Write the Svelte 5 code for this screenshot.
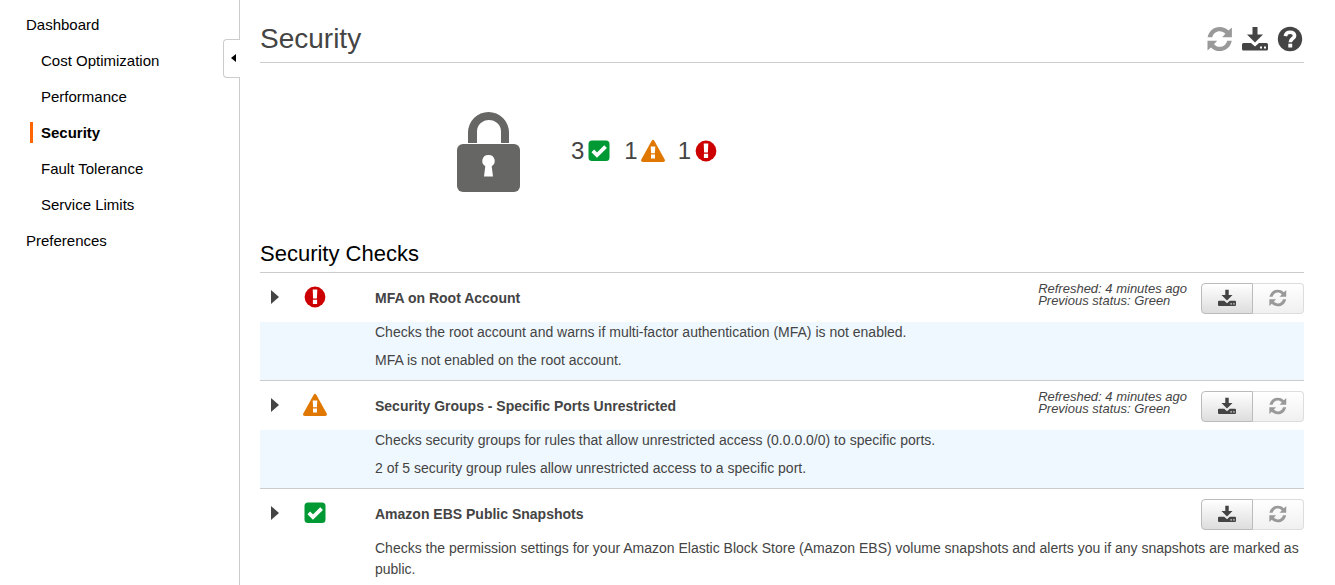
<script>
  const nav = [
    { label: 'Dashboard', level: 0 },
    { label: 'Cost Optimization', level: 1 },
    { label: 'Performance', level: 1 },
    { label: 'Security', level: 1, current: true },
    { label: 'Fault Tolerance', level: 1 },
    { label: 'Service Limits', level: 1 },
    { label: 'Preferences', level: 0 }
  ];

  const summary = [
    { count: 3, status: 'ok' },
    { count: 1, status: 'warning' },
    { count: 1, status: 'error' }
  ];

  const checks = [
    {
      title: 'MFA on Root Account',
      status: 'error',
      refreshed: 'Refreshed: 4 minutes ago',
      previous: 'Previous status: Green',
      highlighted: true,
      lines: [
        'Checks the root account and warns if multi-factor authentication (MFA) is not enabled.',
        'MFA is not enabled on the root account.'
      ]
    },
    {
      title: 'Security Groups - Specific Ports Unrestricted',
      status: 'warning',
      refreshed: 'Refreshed: 4 minutes ago',
      previous: 'Previous status: Green',
      highlighted: true,
      lines: [
        'Checks security groups for rules that allow unrestricted access (0.0.0.0/0) to specific ports.',
        '2 of 5 security group rules allow unrestricted access to a specific port.'
      ]
    },
    {
      title: 'Amazon EBS Public Snapshots',
      status: 'ok',
      highlighted: false,
      lines: [
        'Checks the permission settings for your Amazon Elastic Block Store (Amazon EBS) volume snapshots and alerts you if any snapshots are marked as public.'
      ]
    }
  ];
</script>

{#snippet statusIcon(status)}
  <svg class="status" viewBox="0 0 24 24" aria-hidden="true">
    {#if status === 'ok'}
      <rect x="1.5" y="1.5" width="21" height="20.5" rx="3.5" fill="#093" />
      <path d="M5.8 11.8 10 16 18.6 7.6" fill="none" stroke="#fff" stroke-width="3.8" />
    {:else if status === 'warning'}
      <path d="M10.7 1.7Q12 -.3 13.3 1.7L23.7 20.4Q24.5 22.7 22.2 22.9H1.8Q-.5 22.7.3 20.4Z" fill="#e07700" />
      <path d="M9.700 7.500H14.300L13.900 14.300H10.100ZM10 15.500H14V19.500H10Z" fill="#fff" />
    {:else}
      <circle cx="12" cy="12" r="10.4" fill="#c00" />
      <path d="M9.700 4.600H14.300L13.900 13.400H10.100ZM9.900 14.800H14.100V18.900H9.900Z" fill="#fff" />
    {/if}
  </svg>
{/snippet}

{#snippet refreshIcon()}
  <svg class="glyph" viewBox="0 0 26 26" aria-hidden="true">
    <path
      fill="currentColor"
      d="M.6 11.300C2 4.700 6.700 1 12.700 1C16.200 1 19.100 2.200 21.500 4.600L24.900 1.500V11.300H15.200L18.400 7.800C16.800 6.100 15 5.200 12.700 5.200C8.900 5.200 6.200 7.500 5.200 11.300ZM24.800 14.700C23.400 21.300 18.700 25 12.700 25C9.200 25 6.300 23.800 3.900 21.400L.5 24.500V14.700H10.200L7 18.200C8.600 19.900 10.400 20.800 12.700 20.800C16.500 20.800 19.200 18.500 20.200 14.700Z"
    />
  </svg>
{/snippet}

{#snippet downloadIcon()}
  <svg class="glyph" viewBox="0 0 26 26" aria-hidden="true">
    <path
      fill="currentColor"
      fill-rule="evenodd"
      d="M10.500 1H15.500V8.500H21L13 16.600 5 8.500H10.500ZM1.500 17H9L13 20.500 17 17H24.500Q26 17 26 18.500V23Q26 24.500 24.500 24.500H1.500Q0 24.500 0 23V18.500Q0 17 1.500 17ZM18 20.500V22.500H20V20.500ZM22 20.500V22.500H24V20.500Z"
    />
  </svg>
{/snippet}

<div class="page">
  <aside>
    <nav aria-label="Main">
      {#each nav as item}
        <a
          href="#{item.label}"
          class:nested={item.level === 1}
          class:current={item.current}
          aria-current={item.current ? 'page' : undefined}><span>{item.label}</span></a>
      {/each}
    </nav>
    <button class="collapse" type="button" aria-label="Collapse menu">
      <svg viewBox="0 0 6 8" aria-hidden="true"><path d="M6 0V8L1 4Z" /></svg>
    </button>
  </aside>

  <main>
    <header>
      <h1>Security</h1>
      <div class="tools">
        <button class="muted" type="button" aria-label="Refresh all">{@render refreshIcon()}</button>
        <button type="button" aria-label="Download all">{@render downloadIcon()}</button>
        <button type="button" aria-label="Help">
          <svg class="glyph" viewBox="0 0 26 26" aria-hidden="true">
            <circle cx="13" cy="13" r="12.200" fill="currentColor" />
            <path d="M8.300 10.100C8.900 7.300 10.700 6.200 13.100 6.200C15.800 6.200 17.600 7.700 17.600 9.700C17.600 12.700 13.300 12.500 13.300 16.300" fill="none" stroke="#fff" stroke-width="3.600" />
            <path d="M11.300 17.700H15.200V21.500H11.300Z" fill="#fff" />
          </svg>
        </button>
      </div>
    </header>

    <section class="summary" aria-label="Summary">
      <svg class="lock" viewBox="0 0 64 80" aria-hidden="true">
        <path d="M11 31V20.500A20.500 20.500 0 0 1 52 20.500V31H44V19.500A12 11.500 0 0 0 20 19.500V31Z" fill="#666664" />
        <rect x="0" y="32" width="63" height="48" rx="6" fill="#666664" />
        <path d="M31.500 43A6 6 0 0 1 34.700 54.200L36 64.500H27L28.300 54.200A6 6 0 0 1 31.500 43Z" fill="#fff" />
      </svg>
      <ul>
        {#each summary as item}
          <li>{item.count}{@render statusIcon(item.status)}</li>
        {/each}
      </ul>
    </section>

    <h2>Security Checks</h2>
    {#each checks as check}
      <article>
        <div class="head">
          <div class="marker">
            <button class="expand" type="button" aria-label="Expand {check.title}">
              <svg viewBox="0 0 8 14" aria-hidden="true"><path d="M0 0 8 7 0 14Z" fill="currentColor" /></svg>
            </button>
            {@render statusIcon(check.status)}
          </div>
          <h3>{check.title}</h3>
          {#if check.refreshed}
            <p class="times">{check.refreshed}<br />{check.previous}</p>
          {/if}
          <div class="actions">
            <button type="button" aria-label="Download {check.title}">{@render downloadIcon()}</button>
            <button type="button" disabled aria-label="Refresh {check.title}">{@render refreshIcon()}</button>
          </div>
        </div>
        <div class="detail" class:highlighted={check.highlighted}>
          {#each check.lines as line}<p>{line}</p>{/each}
        </div>
      </article>
    {/each}
  </main>
</div>

<style>
  :global(body) {
    margin: 0;
    background: #fff;
  }
  .page {
    display: flex;
    min-height: 100vh;
    font-family: 'Liberation Sans', Arial, sans-serif;
    font-size: 14px;
    color: #444;
  }
  h1, h2, h3, p, ul {
    margin: 0;
    padding: 0;
    font-weight: normal;
  }
  button {
    margin: 0;
    padding: 0;
    border: 0;
    background: none;
    color: inherit;
    font: inherit;
    cursor: pointer;
  }
  svg {
    display: block;
    flex: none;
  }
  aside {
    position: relative;
    box-sizing: border-box;
    flex: none;
    width: 240px;
    padding: 6px 0;
    border-right: 1px solid #ccc;
  }
  nav {
    display: flex;
    flex-direction: column;
  }
  nav a {
    display: flex;
    align-items: center;
    height: 36px;
    padding-left: 26px;
    font-size: 15px;
    color: #000;
    text-decoration: none;
  }
  nav a.nested {
    padding-left: 41px;
  }
  nav a.current {
    padding-left: 30px;
    font-weight: bold;
  }
  .current span {
    padding-left: 8px;
    border-left: 3px solid #f60;
    line-height: 21px;
  }
  .collapse {
    position: absolute;
    top: 39px;
    right: -1px;
    display: flex;
    align-items: center;
    box-sizing: border-box;
    width: 17px;
    height: 39px;
    padding: 0 0 2px 6px;
    border: 1px solid #ccc;
    border-right: 0;
    border-radius: 4px 0 0 4px;
    background: #fff;
  }
  .collapse svg {
    width: 6px;
    height: 8px;
  }
  main {
    flex: 1;
    min-width: 0;
    padding: 16px 31px 0 20px;
  }
  header {
    display: flex;
    justify-content: space-between;
    align-items: center;
    height: 46px;
    border-bottom: 1px solid #ccc;
  }
  h1 {
    font-size: 28px;
    line-height: 46px;
  }
  .tools {
    display: flex;
    gap: 9px;
    padding-right: 1px;
  }
  .glyph {
    width: 26px;
    height: 26px;
  }
  .muted {
    color: #999;
  }
  .summary {
    display: flex;
    align-items: center;
    gap: 50px;
    padding: 49px 0 46px 197px;
  }
  .lock {
    width: 64px;
    height: 80px;
  }
  ul {
    display: flex;
    gap: 13px;
    padding-bottom: 2px;
    list-style: none;
  }
  li {
    display: flex;
    align-items: center;
    gap: 3px;
    font-size: 24px;
    line-height: 24px;
  }
  .status {
    width: 24px;
    height: 24px;
  }
  h2 {
    padding-bottom: 3px;
    font-size: 22px;
    line-height: 31px;
    color: #000;
  }
  article {
    border-top: 1px solid #ccc;
  }
  .head {
    display: flex;
    align-items: center;
    box-sizing: border-box;
    height: 49px;
    padding-top: 2px;
  }
  .marker {
    display: flex;
    align-items: center;
    padding-bottom: 4px;
  }
  .expand {
    padding: 0 24px 0 11px;
  }
  .expand svg {
    width: 8px;
    height: 14px;
  }
  h3 {
    flex: 1;
    padding-left: 48px;
    font-size: 14px;
    line-height: 21px;
    font-weight: bold;
  }
  .times {
    padding: 0 14px 8px 0;
    font-size: 13px;
    line-height: 12px;
    font-style: italic;
  }
  .actions {
    display: flex;
  }
  .actions button {
    display: flex;
    align-items: center;
    justify-content: center;
    box-sizing: border-box;
    width: 52px;
    height: 31px;
    padding-bottom: 2px;
    border: 1px solid #bbb;
    border-radius: 4px 0 0 4px;
    background: linear-gradient(#fff, #ddd);
  }
  .actions button:disabled {
    width: 51px;
    border-color: #ddd;
    border-left: 0;
    border-radius: 0 4px 4px 0;
    background: linear-gradient(#fff, #f0f0f0);
    color: #999;
    cursor: default;
  }
  .actions .glyph {
    width: 18px;
    height: 18px;
  }
  .detail {
    display: flex;
    flex-direction: column;
    gap: 7px;
    padding: 0 0 9px 115px;
    line-height: 21px;
  }
  .highlighted {
    background: #f0f8ff;
  }
</style>
